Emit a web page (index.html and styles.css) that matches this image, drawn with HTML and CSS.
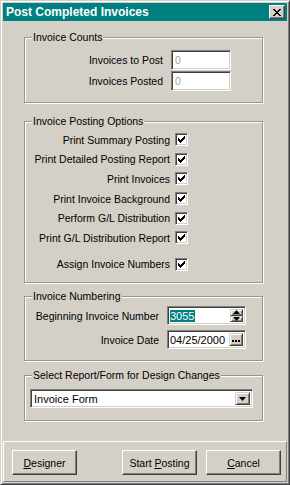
FILE: index.html
```html
<!DOCTYPE html>
<html lang="en">
<head>
    <meta charset="UTF-8">
    <title>Post Completed Invoices</title>
    <link rel="stylesheet" href="styles.css">
</head>
<body>
    <div class="window">
        <div class="titlebar">
            <span class="title">Post Completed Invoices</span>
            <button class="close-btn" aria-label="Close">
                <svg width="8" height="7" viewBox="0 0 8 7" shape-rendering="crispEdges">
                    <path d="M0 0h2v1h-2zM6 0h2v1h-2zM1 1h2v1h-2zM5 1h2v1h-2zM2 2h4v1h-4zM3 3h2v1h-2zM2 4h4v1h-4zM1 5h2v1h-2zM5 5h2v1h-2zM0 6h2v1h-2zM6 6h2v1h-2z" fill="#000"/>
                </svg>
            </button>
        </div>

        <div class="content">
            <div class="group counts">
                <div class="caption">Invoice Counts</div>
                <div class="rows">
                    <div class="row">
                        <label>Invoices to Post</label>
                        <div class="field count-field">0</div>
                    </div>
                    <div class="row">
                        <label>Invoices Posted</label>
                        <div class="field count-field">0</div>
                    </div>
                </div>
            </div>

            <div class="group options">
                <div class="caption">Invoice Posting Options</div>
                <div class="rows">
                    <div class="row check-row">
                        <label>Print Summary Posting</label>
                        <span class="checkbox"><svg width="7" height="7" viewBox="0 0 7 7" shape-rendering="crispEdges"><path d="M6 0h1v3h-1v1h-1v1h-1v1h-1v1h-1v-1h-1v-1h-1v-3h1v1h1v1h1v-1h1v-1h1z" fill="#000"/></svg></span>
                    </div>
                    <div class="row check-row">
                        <label>Print Detailed Posting Report</label>
                        <span class="checkbox"><svg width="7" height="7" viewBox="0 0 7 7" shape-rendering="crispEdges"><path d="M6 0h1v3h-1v1h-1v1h-1v1h-1v1h-1v-1h-1v-1h-1v-3h1v1h1v1h1v-1h1v-1h1z" fill="#000"/></svg></span>
                    </div>
                    <div class="row check-row">
                        <label>Print Invoices</label>
                        <span class="checkbox"><svg width="7" height="7" viewBox="0 0 7 7" shape-rendering="crispEdges"><path d="M6 0h1v3h-1v1h-1v1h-1v1h-1v1h-1v-1h-1v-1h-1v-3h1v1h1v1h1v-1h1v-1h1z" fill="#000"/></svg></span>
                    </div>
                    <div class="row check-row">
                        <label>Print Invoice Background</label>
                        <span class="checkbox"><svg width="7" height="7" viewBox="0 0 7 7" shape-rendering="crispEdges"><path d="M6 0h1v3h-1v1h-1v1h-1v1h-1v1h-1v-1h-1v-1h-1v-3h1v1h1v1h1v-1h1v-1h1z" fill="#000"/></svg></span>
                    </div>
                    <div class="row check-row">
                        <label>Perform G/L Distribution</label>
                        <span class="checkbox"><svg width="7" height="7" viewBox="0 0 7 7" shape-rendering="crispEdges"><path d="M6 0h1v3h-1v1h-1v1h-1v1h-1v1h-1v-1h-1v-1h-1v-3h1v1h1v1h1v-1h1v-1h1z" fill="#000"/></svg></span>
                    </div>
                    <div class="row check-row">
                        <label>Print G/L Distribution Report</label>
                        <span class="checkbox"><svg width="7" height="7" viewBox="0 0 7 7" shape-rendering="crispEdges"><path d="M6 0h1v3h-1v1h-1v1h-1v1h-1v1h-1v-1h-1v-1h-1v-3h1v1h1v1h1v-1h1v-1h1z" fill="#000"/></svg></span>
                    </div>
                    <div class="row check-row last">
                        <label>Assign Invoice Numbers</label>
                        <span class="checkbox"><svg width="7" height="7" viewBox="0 0 7 7" shape-rendering="crispEdges"><path d="M6 0h1v3h-1v1h-1v1h-1v1h-1v1h-1v-1h-1v-1h-1v-3h1v1h1v1h1v-1h1v-1h1z" fill="#000"/></svg></span>
                    </div>
                </div>
            </div>

            <div class="group numbering">
                <div class="caption">Invoice Numbering</div>
                <div class="rows">
                    <div class="row">
                        <label>Beginning Invoice Number</label>
                        <div class="field combo-field">
                            <span class="value"><span class="selected">3055</span></span>
                            <span class="spin">
                                <span class="spin-btn"><svg width="7" height="4" viewBox="0 0 7 4"><path d="M3.5 0L7 4H0z" fill="#000"/></svg></span>
                                <span class="spin-btn"><svg width="7" height="4" viewBox="0 0 7 4"><path d="M0 0h7L3.5 4z" fill="#000"/></svg></span>
                            </span>
                        </div>
                    </div>
                    <div class="row">
                        <label>Invoice Date</label>
                        <div class="field combo-field">
                            <span class="value">04/25/2000</span>
                            <span class="dots-btn"><svg width="8" height="2" viewBox="0 0 8 2" shape-rendering="crispEdges"><path d="M0 0h2v2h-2zM3 0h2v2h-2zM6 0h2v2h-2z" fill="#000"/></svg></span>
                        </div>
                    </div>
                </div>
            </div>

            <div class="group design">
                <div class="caption">Select Report/Form for Design Changes</div>
                <div class="field select-field">
                    <span class="value">Invoice Form</span>
                    <span class="drop-btn"><svg width="7" height="4" viewBox="0 0 7 4"><path d="M0 0h7L3.5 4z" fill="#000"/></svg></span>
                </div>
            </div>
        </div>

        <div class="button-bar">
            <button class="btn designer"><u>D</u>esigner</button>
            <button class="btn start">Start <u>P</u>osting</button>
            <button class="btn cancel"><u>C</u>ancel</button>
        </div>
    </div>
</body>
</html>
```

FILE: styles.css
```css
body {
    margin: 0;
    background-color: #d4d0c8;
    font-family: "Liberation Sans", Arial, sans-serif;
    font-size: 10.5px;
    color: #000;
}
.window {
    width: 290px;
    height: 485px;
    box-sizing: border-box;
    border: 1px solid;
    border-color: #d4d0c8 #404040 #404040 #d4d0c8;
    box-shadow: inset 1px 1px 0 #fff, inset -1px -1px 0 #808080;
    padding: 2px;
    display: flex;
    flex-direction: column;
}
.titlebar {
    height: 18px;
    background-color: #008080;
    color: #fff;
    display: flex;
    align-items: center;
    justify-content: space-between;
    padding: 0 2px 0 3px;
}
.title {
    font-weight: bold;
    font-size: 12px;
}
.close-btn {
    width: 16px;
    height: 14px;
    padding: 0;
    box-sizing: border-box;
    background-color: #d4d0c8;
    border: 1px solid;
    border-color: #fff #404040 #404040 #fff;
    box-shadow: inset -1px -1px 0 #808080;
    display: flex;
    align-items: center;
    justify-content: center;
}

/* group boxes */
.content {
    padding-left: 21px;
}
.group {
    width: 239px;
    box-sizing: border-box;
    border: 1px solid #9d9683;
    box-shadow: inset 1px 1px 0 #fff, 1px 1px 0 #fff;
}
.caption {
    display: table;
    margin: -7px 0 0 7px;
    padding: 0 1px;
    line-height: 13px;
    background-color: #d4d0c8;
}
.counts {
    margin-top: 16px;
    height: 66px;
}
.options {
    margin-top: 18px;
    height: 162px;
}
.numbering {
    margin-top: 13px;
    height: 65px;
}
.design {
    margin-top: 14px;
    height: 46px;
}

.row {
    display: flex;
    align-items: center;
    justify-content: flex-end;
}
.row label {
    margin-right: 8px;
}
.counts .rows {
    margin-top: 6px;
    padding-right: 31px;
}
.counts .row {
    height: 20px;
    margin-bottom: 1px;
}
.options .rows {
    margin-top: 2px;
    padding-right: 74px;
}
.check-row {
    height: 19.6px;
}
.check-row label {
    margin-right: 5px;
}
.check-row.last {
    margin-top: 7px;
}
.checkbox {
    width: 13px;
    height: 13px;
    box-sizing: border-box;
    background-color: #fff;
    border: 1px solid;
    border-color: #808080 #fff #fff #808080;
    box-shadow: inset 1px 1px 0 #404040, inset -1px -1px 0 #d4d0c8;
    display: flex;
    align-items: center;
    justify-content: center;
}
.numbering .rows {
    margin-top: 3px;
    padding-right: 16px;
}
.numbering .row {
    height: 19px;
    margin-bottom: 5px;
}

/* sunken fields */
.field {
    box-sizing: border-box;
    background-color: #fff;
    border: 1px solid;
    border-color: #808080 #fff #fff #808080;
    box-shadow: inset 1px 1px 0 #404040, inset -1px -1px 0 #d4d0c8;
    padding: 2px;
}
.count-field {
    width: 60px;
    height: 20px;
    color: #a89f80;
    padding-left: 3px;
    line-height: 15px;
}
.combo-field {
    width: 79px;
    height: 19px;
    display: flex;
    align-items: stretch;
    padding-left: 2px;
}
.value {
    flex: 1;
    line-height: 15px;
    white-space: nowrap;
    overflow: hidden;
    font-size: 11px;
}
.selected {
    background-color: #008080;
    color: #fff;
    padding-right: 1px;
}
.spin {
    width: 13px;
    display: flex;
    flex-direction: column;
}
.spin-btn, .dots-btn, .drop-btn {
    box-sizing: border-box;
    background-color: #d4d0c8;
    border: 1px solid;
    border-color: #d4d0c8 #404040 #404040 #d4d0c8;
    box-shadow: inset 1px 1px 0 #fff, inset -1px -1px 0 #808080;
    display: flex;
    align-items: center;
    justify-content: center;
}
.spin-btn {
    flex: 1;
}
.dots-btn {
    width: 14px;
    padding-top: 3px;
}
.select-field {
    width: 223px;
    height: 19px;
    margin: 7px 0 0 5px;
    display: flex;
    align-items: stretch;
    padding-left: 3px;
}
.drop-btn {
    width: 15px;
}

/* bottom buttons */
.button-bar {
    flex: 1;
    margin-top: 20px;
    border: 1px solid;
    border-color: #fff #808080 #808080 #fff;
    padding: 8px 5px 0 8px;
    display: flex;
    align-items: flex-start;
}
.btn {
    height: 25px;
    width: 75px;
    box-sizing: border-box;
    background-color: #d4d0c8;
    border: 1px solid;
    border-color: #fff #404040 #404040 #fff;
    box-shadow: inset -1px -1px 0 #808080;
    font-family: "Liberation Sans", Arial, sans-serif;
    font-size: 10.5px;
    color: #000;
    padding: 0;
}
.designer {
    width: 65px;
}
.start {
    margin-left: auto;
    margin-right: 9px;
}
```
